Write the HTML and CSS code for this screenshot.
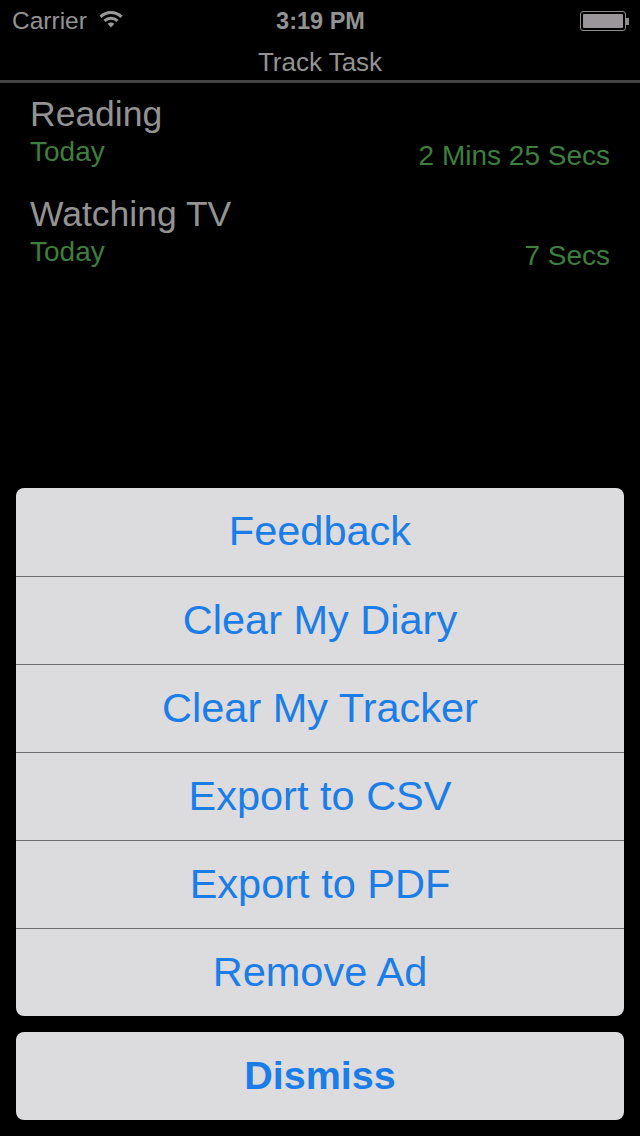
FILE: index.html
```html
<!DOCTYPE html>
<html lang="en">
<head>
    <meta charset="UTF-8">
    <title>Track Task</title>
    <link rel="stylesheet" href="styles.css">
</head>
<body>
    <div class="screen">
        <div class="status-bar">
            <div class="status-left">
                <span>Carrier</span>
                <svg class="wifi" width="24" height="18" viewBox="0 0 24 18">
                    <path d="M1.500 6.800C7.500 1.200 16.500 1.200 22.500 6.800" fill="none" stroke="#9a9a9a" stroke-width="3"/>
                    <path d="M5.500 10.800C9.300 7.400 14.700 7.400 18.500 10.800" fill="none" stroke="#9a9a9a" stroke-width="3"/>
                    <path d="M8.600 13.800C10.500 12.200 13.500 12.200 15.400 13.800L12 17.500Z" fill="#9a9a9a"/>
                </svg>
            </div>
            <span class="status-time">3:19 PM</span>
            <div class="battery">
                <div class="battery-body"><div class="battery-fill"></div></div>
                <div class="battery-tip"></div>
            </div>
        </div>
        <header class="title-bar">Track Task</header>

        <ul class="task-list">
            <li class="task">
                <div class="task-name">Reading</div>
                <div class="task-meta">
                    <span class="task-day">Today</span>
                    <span class="task-time">2 Mins 25 Secs</span>
                </div>
            </li>
            <li class="task">
                <div class="task-name">Watching TV</div>
                <div class="task-meta">
                    <span class="task-day">Today</span>
                    <span class="task-time">7 Secs</span>
                </div>
            </li>
        </ul>

        <div class="action-sheet">
            <div class="action-group">
                <button class="action">Feedback</button>
                <button class="action">Clear My Diary</button>
                <button class="action">Clear My Tracker</button>
                <button class="action">Export to CSV</button>
                <button class="action">Export to PDF</button>
                <button class="action">Remove Ad</button>
            </div>
            <button class="action action-dismiss">Dismiss</button>
        </div>
    </div>
</body>
</html>
```
FILE: styles.css
```css
* {
    margin: 0;
    padding: 0;
    box-sizing: border-box;
}

body {
    background-color: #000;
    font-family: 'Liberation Sans', Arial, sans-serif;
}

.screen {
    display: flex;
    flex-direction: column;
    height: 1136px;
    overflow: hidden;
}

/* Status bar */
.status-bar {
    display: grid;
    grid-template-columns: 1fr auto 1fr;
    align-items: center;
    height: 42px;
    padding: 0 11px 0 12px;
    color: #939393;
    font-size: 24.500px;
}

.status-left {
    display: flex;
    align-items: center;
    gap: 12px;
}

.wifi {
    margin-top: -4px;
}

.status-time {
    font-weight: bold;
    font-size: 23.500px;
}

.battery {
    display: flex;
    align-items: center;
    justify-self: end;
}

.battery-body {
    width: 46px;
    height: 20px;
    padding: 2px;
    border: 1px solid #8e8e8e;
    border-radius: 3px;
}

.battery-fill {
    height: 100%;
    background-color: #9a9699;
    border-radius: 1px;
}

.battery-tip {
    width: 3px;
    height: 7px;
    background-color: #8a8a8a;
}

/* Title */
.title-bar {
    height: 41px;
    padding-top: 4px;
    border-bottom: 3px solid #444;
    color: #939393;
    font-size: 26px;
    line-height: 32px;
    text-align: center;
}

/* Tasks */
.task-list {
    list-style: none;
    padding: 10px 30px 0;
}

.task {
    height: 100px;
}

.task-name {
    color: #939393;
    font-size: 35.500px;
    line-height: 42px;
}

.task-meta {
    display: flex;
    justify-content: space-between;
    color: #3d7f3d;
    font-size: 28px;
    line-height: 33px;
}

.task-time {
    margin-top: 4px;
}

/* Action sheet */
.action-sheet {
    display: flex;
    flex-direction: column;
    gap: 16px;
    margin-top: auto;
    padding: 0 16px 16px;
}

.action-group {
    display: flex;
    flex-direction: column;
    border-radius: 8px;
    overflow: hidden;
}

.action {
    height: 88px;
    padding-bottom: 2px;
    border: none;
    background-color: #dcdbdd;
    color: #1a7de8;
    font-family: inherit;
    font-size: 41.500px;
    text-align: center;
}

.action-group .action + .action {
    border-top: 1px solid #6e6e6e;
}

.action-dismiss {
    border-radius: 8px;
    font-size: 39.500px;
    font-weight: bold;
}
```
